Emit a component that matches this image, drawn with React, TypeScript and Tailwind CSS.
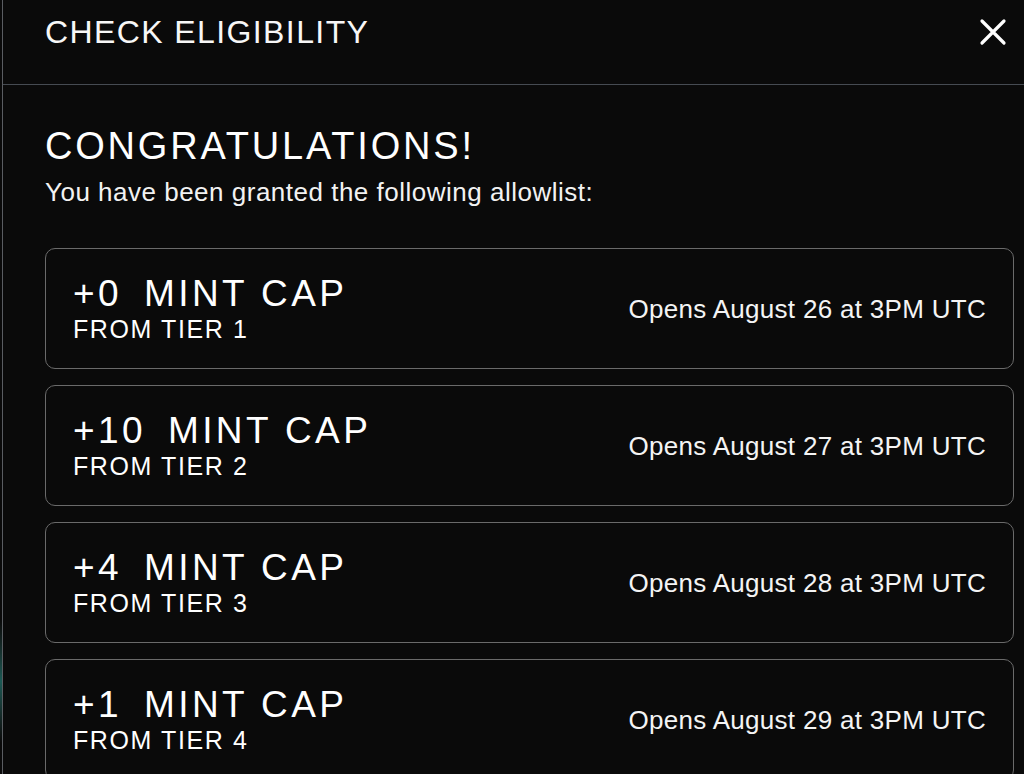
const tiers = [
  { amount: "+0", tier: "1", opens: "August 26" },
  { amount: "+10", tier: "2", opens: "August 27" },
  { amount: "+4", tier: "3", opens: "August 28" },
  { amount: "+1", tier: "4", opens: "August 29" },
];

function CloseIcon() {
  return (
    <svg width="28" height="28" viewBox="0 0 28 28" fill="none" aria-hidden>
      <path
        d="M3 3L25 25M25 3L3 25"
        stroke="#ffffff"
        strokeWidth="3.2"
        strokeLinecap="round"
      />
    </svg>
  );
}

function TierCard({ amount, tier, opens }: { amount: string; tier: string; opens: string }) {
  return (
    <div className="flex h-[121px] shrink-0 items-center justify-between rounded-[10px] border border-[#6a6a6a] pl-[27px] pr-[27px]">
      <div className="flex flex-col pt-px">
        <div className="text-[37px] leading-[40px] tracking-[3.4px] text-white">
          <span>{amount}</span>
          <span className="ml-[22px]">MINT CAP</span>
        </div>
        <div className="text-[25px] leading-[30px] tracking-[1.6px] text-white">
          FROM TIER {tier}
        </div>
      </div>
      <div className="text-[26px] leading-[32px] tracking-[0.3px] text-[#f4f4f4]">
        Opens {opens} at 3PM UTC
      </div>
    </div>
  );
}

export default function App() {
  return (
    <div
      className="flex h-[774px] w-[1024px] overflow-hidden bg-[#0a0a0a] text-white"
      style={{ fontFamily: '"Liberation Sans", Arial, sans-serif' }}
    >
      <div className="w-[2px] shrink-0 bg-gradient-to-b from-[#0a0a0a] from-80% via-[#1b5a55] via-88% to-[#0a0a0a] to-96%" />
      <div className="flex min-w-0 flex-1 flex-col border-l border-[#5a5d62]">
        <header className="flex h-[85px] shrink-0 items-start justify-between border-b border-[#464b52] pl-[42px] pr-[17px] pt-[12px]">
          <h1 className="text-[32px] leading-[40px] tracking-[1.4px] text-[#f7f7f7]">
            CHECK ELIGIBILITY
          </h1>
          <button className="mt-[6px]">
            <CloseIcon />
          </button>
        </header>

        <main className="flex flex-col pl-[42px] pr-[10px] pt-[41px]">
          <h2 className="text-[38px] leading-[40px] tracking-[2.8px] text-white">
            CONGRATULATIONS!
          </h2>
          <p className="mt-[10px] text-[26px] leading-[32px] tracking-[0.5px] text-[#f2f2f2]">
            You have been granted the following allowlist:
          </p>
          <div className="mt-[40px] flex flex-col gap-4">
            {tiers.map((t) => (
              <TierCard key={t.tier} {...t} />
            ))}
          </div>
        </main>
      </div>
    </div>
  );
}
